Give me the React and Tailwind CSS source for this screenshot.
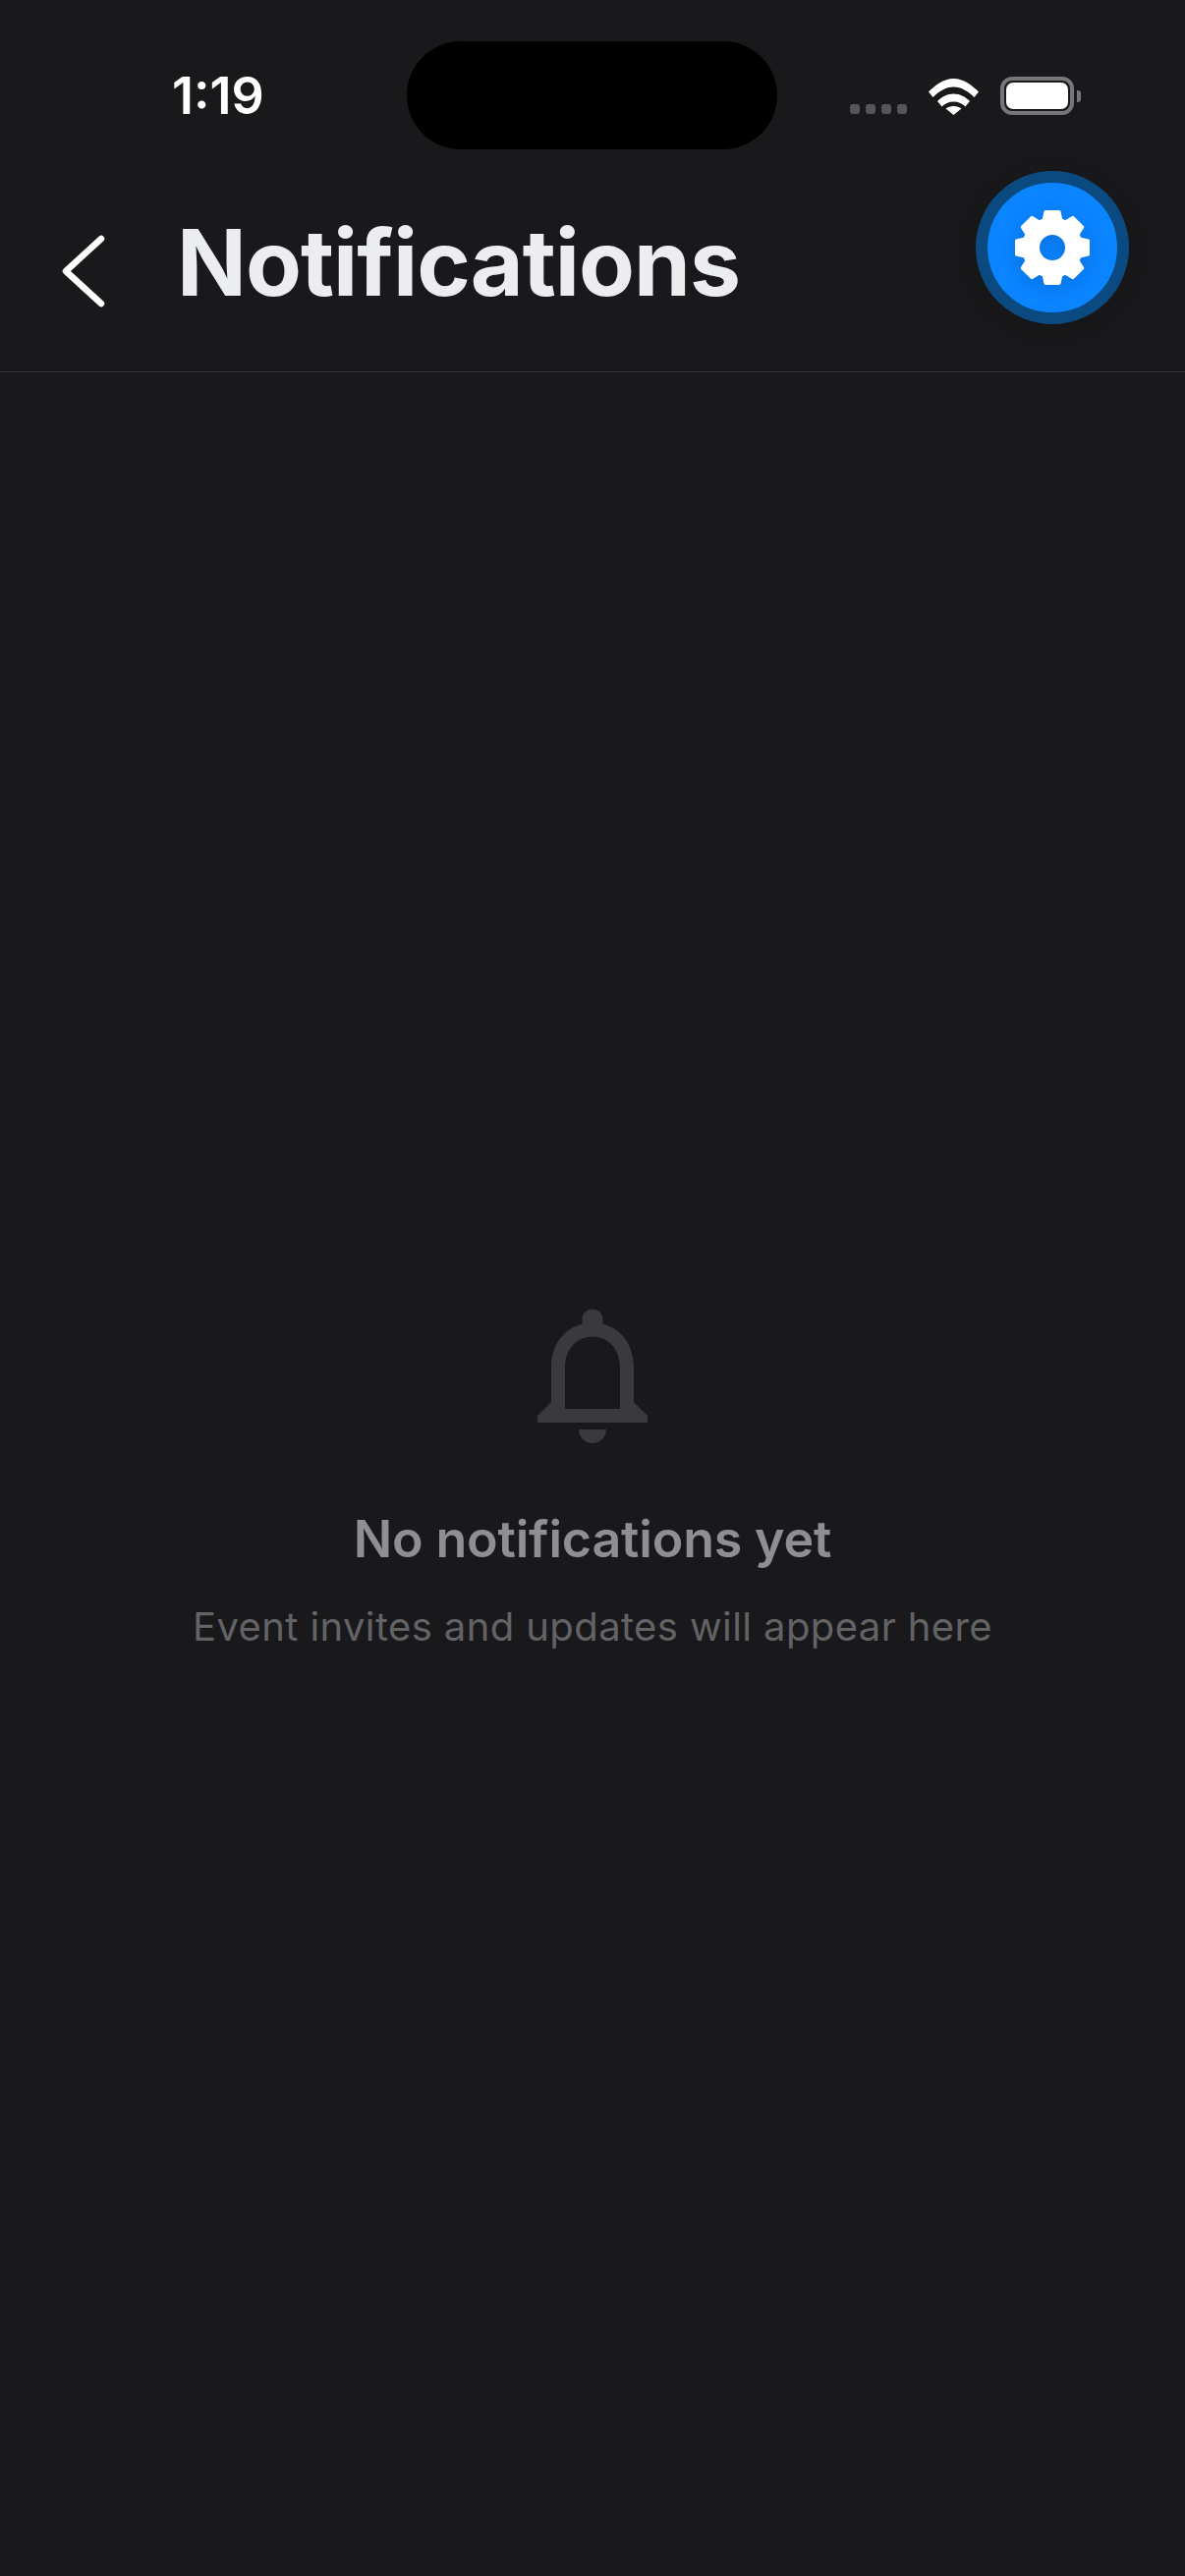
import React from 'react';
import { MdNotificationsNone } from 'react-icons/md';

// 8-tooth gear, corners rounded by the stroke
function gearPoints() {
  const pts = [];
  const tipR = 36.5;
  const baseR = 28;
  for (let i = 0; i < 8; i++) {
    const a = (i * Math.PI) / 4 - Math.PI / 2;
    const ux = Math.cos(a);
    const uy = Math.sin(a);
    const px = -uy;
    const py = ux;
    pts.push([ux * baseR - px * 9, uy * baseR - py * 9]);
    pts.push([ux * tipR - px * 7, uy * tipR - py * 7]);
    pts.push([ux * tipR + px * 7, uy * tipR + py * 7]);
    pts.push([ux * baseR + px * 9, uy * baseR + py * 9]);
  }
  return pts.map((p) => p[0].toFixed(2) + ' ' + p[1].toFixed(2)).join(' L');
}

function Gear() {
  const outline = 'M' + gearPoints() + ' Z';
  return (
    <svg width="84" height="84" viewBox="-42 -42 84 84" className="drop-shadow-[0_4px_8px_rgba(0,0,0,0.13)]">
      <path d={outline + ' M13 0 A13 13 0 1 0 -13 0 A13 13 0 1 0 13 0 Z'} fill="#fff" fillRule="evenodd" />
      <path d={outline} fill="none" stroke="#fff" strokeWidth="3" strokeLinejoin="round" />
    </svg>
  );
}

function StatusIcons() {
  return (
    <div className="flex items-end gap-[22px]">
      <div className="flex gap-[6px] pb-px">
        {[0, 1, 2, 3].map((i) => (
          <span key={i} className="w-[10px] h-[10px] rounded-[3px] bg-[#555558]" />
        ))}
      </div>
      <svg width="51" height="38" viewBox="0 0 51 38" fill="#fff">
        <path d="M0 14.5C6.5 8 15.500 1 25.500 1S44.500 8 51 14.500L46.500 20C41 14.500 33.500 9.500 25.500 9.500S10 14.500 4.500 20Z" />
        <path d="M9 24C13 20 19 16.500 25.500 16.500S38 20 42 24L37.500 29.500C34.500 26.500 30.500 24.500 25.500 24.500S16.500 26.500 13.500 29.500Z" />
        <path d="M17.500 31.500C19.500 30 22.500 29 25.500 29S31.500 30 33.500 31.500L25.500 38Z" />
      </svg>
      <div className="flex items-center gap-[3px]">
        <div className="w-[75px] h-[39px] rounded-[12px] border-[4px] border-[#77777a] p-[2px]">
          <div className="w-full h-full rounded-[7px] bg-white" />
        </div>
        <div className="w-[4px] h-[12px] rounded-r-[3px] bg-[#77777a]" />
      </div>
    </div>
  );
}

export default function App() {
  return (
    <div className="relative w-[1206px] h-[2622px] bg-[#19191b] font-['Inter',sans-serif] overflow-hidden">
      <div className="absolute left-[414px] top-[42px] w-[377px] h-[110px] rounded-[55px] bg-black" />

      <div className="h-[378px] border-b border-[#353537] box-content">
        <div className="flex justify-between items-start pl-[175px] pr-[106px] pt-[68px] h-[125px]">
          <span className="text-[52px] leading-[60px] font-semibold text-white">1:19</span>
          <div className="pt-[10px]"><StatusIcons /></div>
        </div>
        <div className="flex items-start pl-[60px] pt-[86px] gap-[72px]">
          <svg width="48" height="76" viewBox="0 0 48 76" fill="none" stroke="#fff" strokeWidth="6.500" strokeLinecap="round" strokeLinejoin="round" className="mt-[27px]">
            <path d="M43 5 L7 38 L43 71" />
          </svg>
          <h1 className="text-[93px] leading-[112px] font-bold tracking-[-1px] text-[#ecedef]">Notifications</h1>
        </div>
      </div>

      <button className="absolute left-[993px] top-[174px] w-[156px] h-[156px] rounded-full bg-[#0a84ff] border-[12px] border-[#0a4a80] flex items-center justify-center shadow-[0_4px_24px_rgba(0,0,0,0.15)]">
        <Gear />
      </button>

      <div className="flex flex-col items-center pt-[936px]">
        <MdNotificationsNone size={168} color="#3a3a3c" />
        <p className="mt-[52px] text-[52px] leading-[64px] font-semibold tracking-[-0.2px] text-[#8e8e93]">No notifications yet</p>
        <p className="mt-[33px] text-[40px] leading-[48px] tracking-[0.4px] text-[#636366]">Event invites and updates will appear here</p>
      </div>
    </div>
  );
}
